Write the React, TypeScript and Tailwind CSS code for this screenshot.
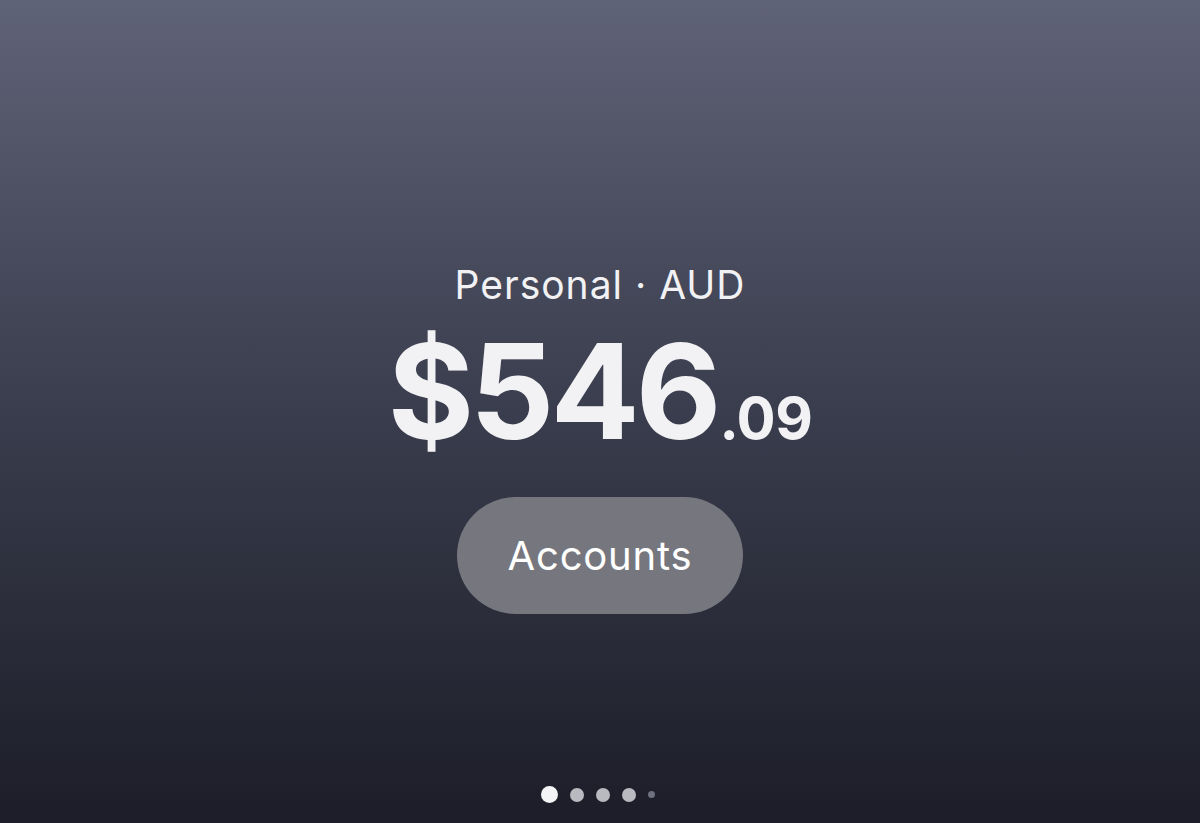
export default function App() {
  const dots = [
    'w-[17px] h-[17px] bg-[#f4f4f6]',
    'w-[14px] h-[14px] bg-[#b9babf]',
    'w-[14px] h-[14px] bg-[#b9babf]',
    'w-[14px] h-[14px] bg-[#b9babf]',
    'w-[7px] h-[7px] bg-[#6e7080]',
  ];

  return (
    <div
      className="w-[1200px] h-[823px] flex flex-col items-center bg-gradient-to-b from-[#5f6377] via-[#3a3d4d] to-[#1c1d28] text-[#f2f2f4]"
      style={{ fontFamily: 'Inter, "Noto Sans", sans-serif' }}
    >
      <div className="flex-1 flex flex-col items-center pt-[261px]">
        <div className="text-[39px] leading-[48px] tracking-[1px]">Personal · AUD</div>
        <div className="flex items-baseline mt-[16px] font-bold leading-none tracking-[-4px]">
          <span className="text-[132px]">$546</span>
          <span className="text-[58px] tracking-[-0.5px] ml-[2px]">.09</span>
        </div>
        <button className="mt-[40px] w-[286px] h-[117px] rounded-full bg-[#76777e] text-white text-[40px] tracking-[0.8px]">
          Accounts
        </button>
      </div>
      <div className="flex items-center gap-[12px] pb-[20px] pr-[5px]">
        {dots.map((c, i) => (
          <div key={i} className={`rounded-full ${c}`} />
        ))}
      </div>
    </div>
  );
}
